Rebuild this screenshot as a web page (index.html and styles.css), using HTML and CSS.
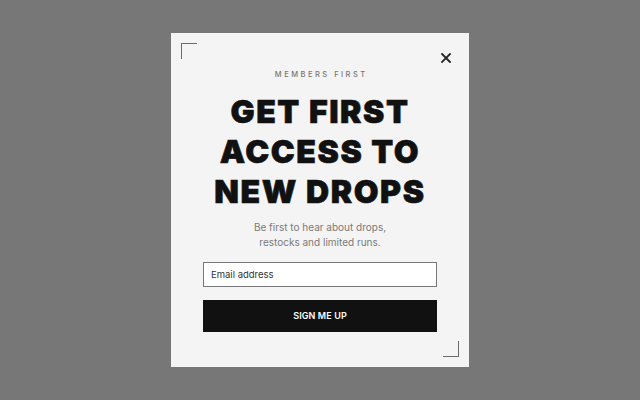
FILE: index.html
```html
<!DOCTYPE html>
<html>
<head>
<meta charset="utf-8">
<link rel="stylesheet" href="styles.css">
</head>
<body>
<div class="overlay">
  <div class="modal">
    <span class="corner corner-tl"></span>
    <span class="corner corner-br"></span>
    <button class="close" aria-label="Close">
      <svg width="10" height="10" viewBox="0 0 10 10"><path d="M1 1L9 9M9 1L1 9" stroke="#222" stroke-width="1.8" stroke-linecap="square"/></svg>
    </button>
    <div class="eyebrow">MEMBERS FIRST</div>
    <h1 class="headline">GET FIRST<br>ACCESS TO<br>NEW DROPS</h1>
    <p class="sub">Be first to hear about drops,<br>restocks and limited runs.</p>
    <div class="email">Email address</div>
    <div class="cta">SIGN ME UP</div>
  </div>
</div>
</body>
</html>
```
FILE: styles.css
```css
html, body {
  margin: 0;
  padding: 0;
  height: 100%;
}
body {
  background: #777777;
  font-family: Inter, "Liberation Sans", sans-serif;
}
.overlay {
  height: 400px;
  display: flex;
  align-items: center;
  justify-content: center;
}
.modal {
  position: relative;
  width: 298px;
  height: 334px;
  box-sizing: border-box;
  background: #f4f4f4;
  padding: 36px 32px 0;
  display: flex;
  flex-direction: column;
  align-items: stretch;
  text-align: center;
}
.corner {
  position: absolute;
  width: 16px;
  height: 16px;
  box-sizing: border-box;
}
.corner-tl {
  left: 10px;
  top: 10px;
  border-left: 1.5px solid #6a6a6a;
  border-top: 1.5px solid #6a6a6a;
}
.corner-br {
  right: 10px;
  bottom: 10px;
  border-right: 1.5px solid #6a6a6a;
  border-bottom: 1.5px solid #6a6a6a;
}
.close {
  position: absolute;
  right: 18px;
  top: 20px;
  width: 10px;
  height: 10px;
  padding: 0;
  border: 0;
  background: none;
  display: flex;
}
.eyebrow {
  font-size: 7.5px;
  line-height: 12px;
  letter-spacing: 2.5px;
  font-weight: 500;
  color: #777;
  padding-left: 2.5px;
}
.headline {
  margin: 11px 0 0;
  font-family: Inter, sans-serif;
  font-weight: 900;
  font-size: 32px;
  line-height: 40px;
  letter-spacing: 1.6px;
  color: #111;
  -webkit-text-stroke: 0.6px #111;
}
.sub {
  margin: 8px 0 0;
  font-size: 10px;
  line-height: 15px;
  color: #7a7a7a;
}
.email {
  margin-top: 12px;
  height: 25px;
  box-sizing: border-box;
  border: 1px solid #777;
  background: #fff;
  font-size: 9.5px;
  line-height: 23px;
  color: #333;
  text-align: left;
  padding-left: 7px;
}
.cta {
  margin-top: 13px;
  height: 32px;
  background: #111;
  color: #fff;
  font-size: 9px;
  font-weight: 600;
  line-height: 32px;
  letter-spacing: 0.1px;
}
```
